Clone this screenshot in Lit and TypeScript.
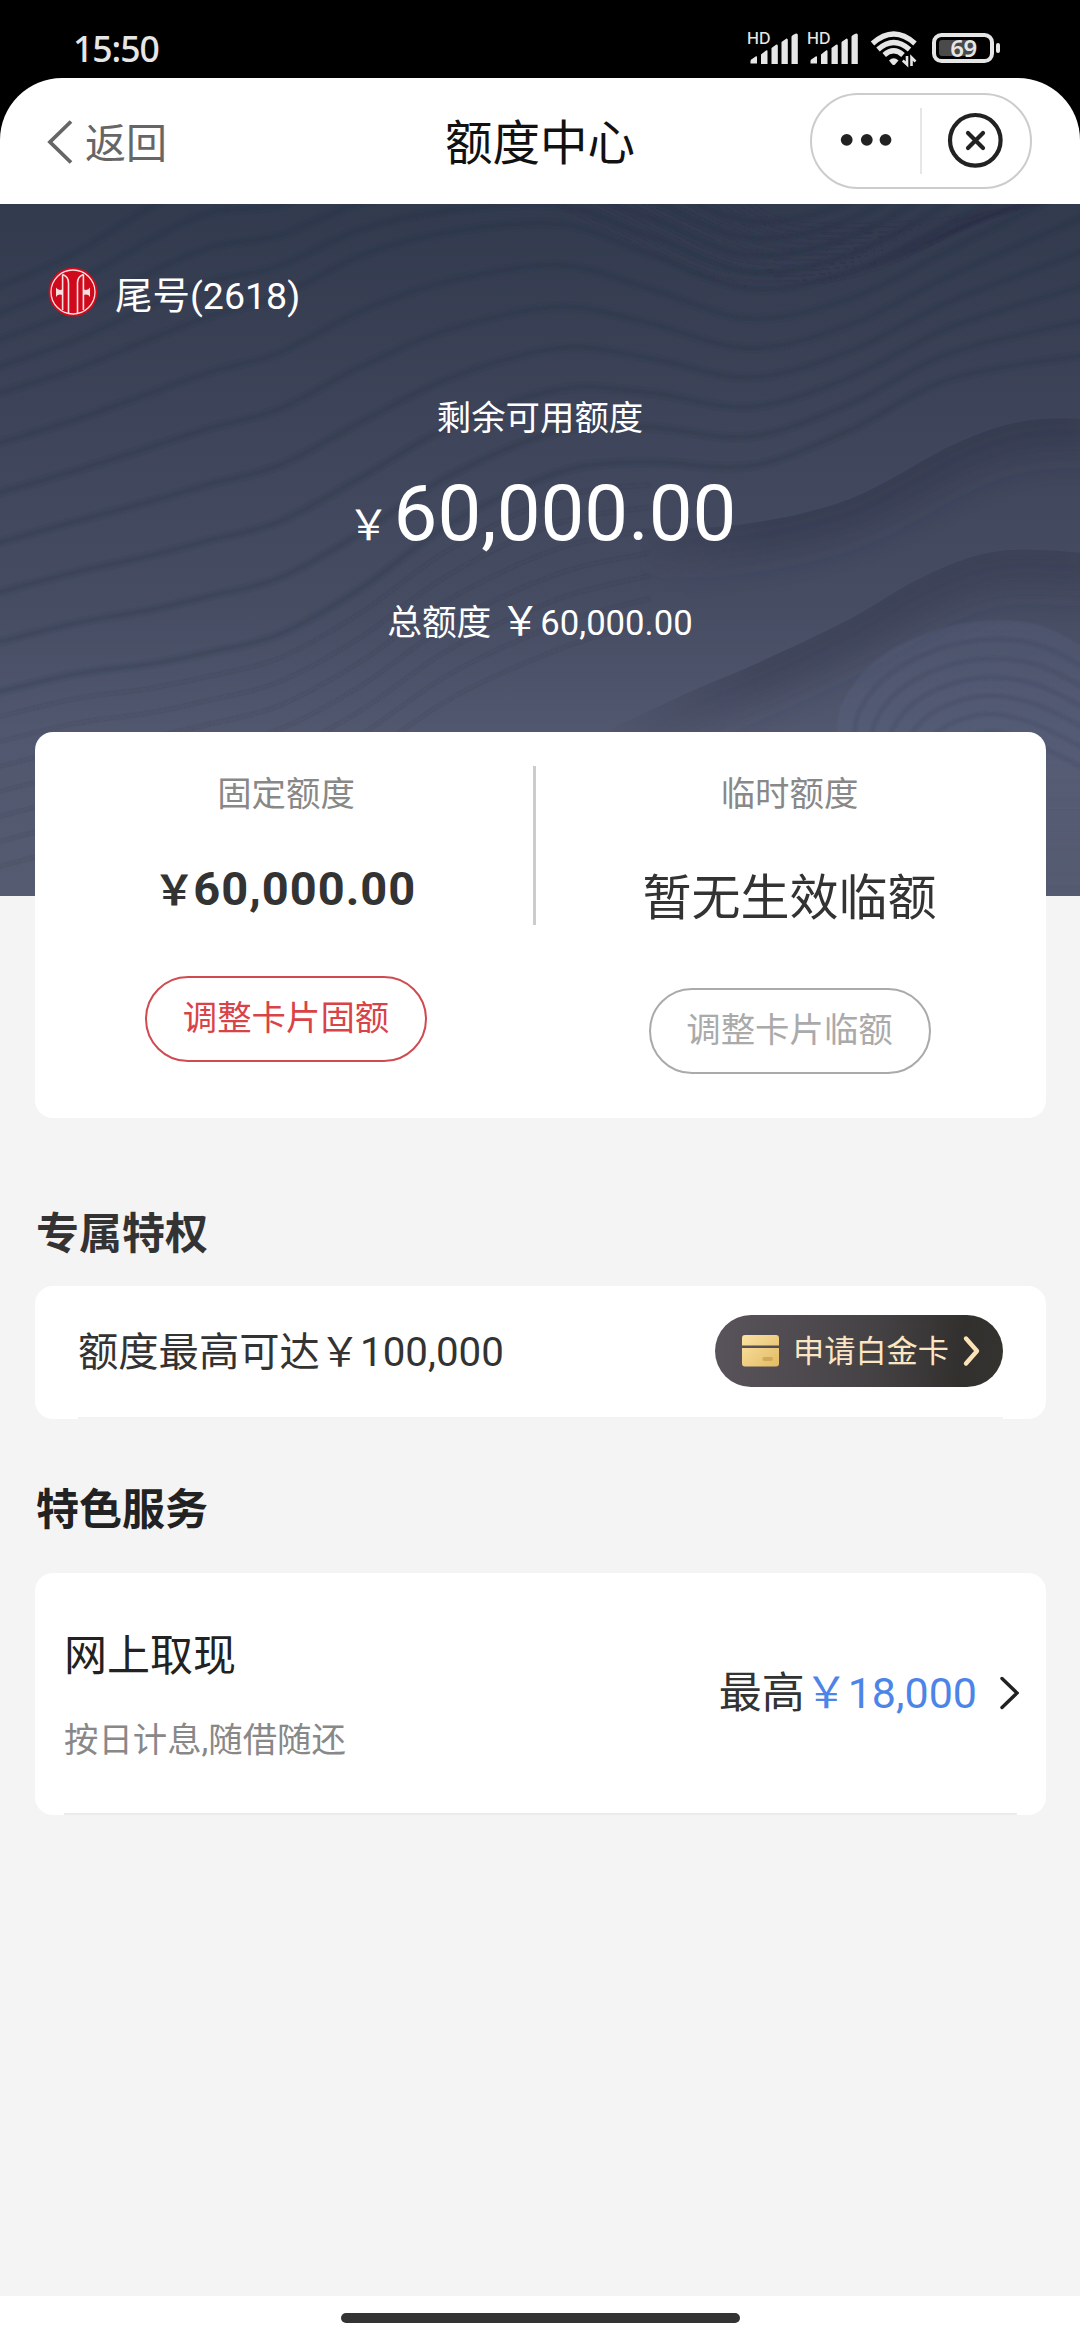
import { LitElement, html, css, svg } from "lit";
import { customElement, property } from "lit/decorators.js";

type Pt = [number, number];

/** Smooth curve through the given points (Catmull-Rom converted to cubic segments). */
function smooth(pts: Pt[]): string {
  let d = `M${pts[0][0]} ${pts[0][1]}`;
  for (let i = 0; i < pts.length - 1; i++) {
    const p0 = pts[i - 1] ?? pts[i];
    const p1 = pts[i];
    const p2 = pts[i + 1];
    const p3 = pts[i + 2] ?? p2;
    const c = [
      p1[0] + (p2[0] - p0[0]) / 6,
      p1[1] + (p2[1] - p0[1]) / 6,
      p2[0] - (p3[0] - p1[0]) / 6,
      p2[1] - (p3[1] - p1[1]) / 6,
      p2[0],
      p2[1],
    ].map((n) => n.toFixed(1));
    d += `C${c.join(" ")}`;
  }
  return d;
}

const XS = [-10, 75, 150, 210, 280, 360, 450, 560, 650, 750, 850, 950, 1090];
const UPPER = [60, 20, -30, -60, -60, -80, -80, -70, -40, 0, -20, -90, -200];
const MIDDLE = [192, 165, 135, 112, 92, 52, 28, 20, 50, 85, 68, 20, -60];
const LOWER = [490, 470, 460, 448, 430, 385, 320, 268, 258, 262, 226, 175, 150];
const BASE = [690, 668, 655, 640, 620, 580, 520, 470, 440, 425, 415, 400, 395];

function between(a: number[], b: number[], t: number, last = XS.length): string {
  return smooth(XS.slice(0, last).map((x, i) => [x, a[i] + (b[i] - a[i]) * t] as Pt));
}

const RIDGES = [
  ...[0.2, 0.4, 0.6, 0.8].map((t) => between(UPPER, MIDDLE, t)),
  ...[0, 1, 2, 3, 4, 5, 6].map((i) => between(MIDDLE, LOWER, i / 6)),
];
const FAINT = [
  ...Array.from({ length: 7 }, (_, i) => between(LOWER, BASE, (i + 1) / 8, 9)),
  ...Array.from({ length: 12 }, (_, i) =>
    smooth([
      [545 + i * 18, -6],
      [620 + i * 14, 30 - i * 1.5],
      [720 + i * 9, 76 - i * 5],
      [840 + i * 7, 74 - i * 5],
      [930 + i * 6, 40 - i * 3],
      [1000 + i * 6, -6],
    ])
  ),
];
const HILL = Array.from({ length: 7 }, (_, i) =>
  smooth([
    [836 + i * 17, 560],
    [842 + i * 17, 500 + i * 8],
    [885 + i * 13, 450 + i * 14],
    [960 + i * 6, 420 + i * 18],
    [1035, 420 + i * 20],
    [1095, 450 + i * 20],
  ])
);
const CREST: Pt[] = [[640, 326], [745, 320], [850, 295], [955, 240], [1025, 217], [1100, 215]];
const SLOPE: Pt[] = [[600, 530], [690, 488], [760, 458], [850, 415], [925, 372], [1000, 347], [1100, 350]];

@customElement("hero-waves")
export class HeroWaves extends LitElement {
  static styles = css`
    :host { display: block; }
    svg { display: block; width: 100%; height: 100%; }
  `;
  render() {
    return html`<svg viewBox="0 0 1080 692">
      <defs>
        <filter id="wide" x="-20%" y="-60%" width="140%" height="220%"><feGaussianBlur stdDeviation="16"></feGaussianBlur></filter>
        <filter id="thin"><feGaussianBlur stdDeviation="1.3"></feGaussianBlur></filter>
        <linearGradient id="light" x1="0" y1="0" x2="0" y2="1">
          <stop offset="0" stop-color="#666d90" stop-opacity=".2"></stop>
          <stop offset=".5" stop-color="#666d90" stop-opacity=".2"></stop>
          <stop offset="1" stop-color="#666d90" stop-opacity="0"></stop>
        </linearGradient>
        <linearGradient id="side" x1="0" x2="1"><stop offset="0" stop-color="#000"></stop><stop offset=".35" stop-color="#fff"></stop></linearGradient>
        <mask id="ease" maskUnits="userSpaceOnUse" x="600" y="0" width="480" height="692"><rect x="600" width="480" height="692" fill="url(#side)"></rect></mask>
        <clipPath id="crest"><path d=${smooth(CREST) + "V692H640Z"}></path></clipPath>
        <clipPath id="slope"><path d=${smooth(SLOPE) + "V692H600Z"}></path></clipPath>
      </defs>
      <g mask="url(#ease)">
        <g clip-path="url(#crest)"><path d=${smooth(CREST)} fill="none" stroke="#30364d" stroke-opacity=".55" stroke-width="60" filter="url(#wide)"></path></g>
        <g clip-path="url(#slope)"><path d=${smooth(SLOPE)} fill="none" stroke="#33394f" stroke-opacity=".55" stroke-width="66" filter="url(#wide)"></path></g>
      </g>
      <path fill="url(#light)" filter="url(#thin)" d=${HILL[0] + "V692H836Z"}></path>
      <g fill="none" filter="url(#thin)">
        ${RIDGES.map((d) => svg`<path d=${d} stroke="#262c42" stroke-opacity=".09" stroke-width="9"/><path d=${d} stroke="#262c42" stroke-opacity=".17" stroke-width="3"/>`)}
        ${FAINT.map((d) => svg`<path d=${d} stroke="#262c42" stroke-opacity=".12" stroke-width="3.500"/>`)}
        ${HILL.slice(1).map((d) => svg`<path d=${d} stroke="#343b54" stroke-opacity=".22" stroke-width="4"/>`)}
      </g>
    </svg>`;
  }
}

@customElement("status-bar")
export class StatusBar extends LitElement {
  static styles = css`
    :host { display: flex; justify-content: space-between; height: 78px; background: #000; color: #e6e6e6; }
    .time { margin: 23px 0 0 73px; font: 500 35.5px/50px "Noto Sans", Roboto, sans-serif; letter-spacing: -1px; }
    .icons { display: block; width: 264px; height: 78px; margin-right: 76px; }
    .hd { font: 500 16px Inter, Roboto, sans-serif; }
    .level { font: 600 24px "Noto Sans", Roboto, sans-serif; letter-spacing: -0.6px; }
  `;
  private signal(x: number) {
    return svg`<g transform="translate(${x} 0)">
      <text class="hd" x="-1" y="44" fill="#e6e6e6">HD</text>
      <path fill="#e6e6e6" d="M2.5 61Q2.500 59.500 4 59L8 56.300Q9 56 9 57V63.500H2.500ZM13 54.500L18 50.500Q19.500 50 19.500 51V64H13ZM23.500 48L28 44.800Q29.800 44 29.800 46V64H23.500ZM33.500 42L38.500 38.500Q39.800 38.300 39.800 40V64H33.500ZM43.500 36.500Q44 35 48 33.500Q49.800 33.200 49.800 35V64H43.500Z"/>
    </g>`;
  }
  render() {
    return html`
      <div class="time">15:50</div>
      <svg class="icons" viewBox="740 0 264 78">
        ${this.signal(748)}${this.signal(808)}
        <g fill="none" stroke="#e6e6e6" stroke-width="5.200">
          <path d="M872.500 43.500Q893.700 24.500 915 43.500"></path>
          <path d="M878 49.500Q893.700 35.500 909.500 49.500"></path>
          <path d="M884.200 55Q893.700 46.500 903 55"></path>
        </g>
        <path fill="#e6e6e6" d="M889 60.500Q893.700 56 898.500 60.500L895 64.500Q893.700 65.500 892.300 64.500Z"></path>
        <path fill="none" stroke="#e6e6e6" stroke-width="2.600" d="M907 56V64.500L902.800 60.500M911.500 66V57.500L915.500 61.500"></path>
        <rect x="934" y="35" width="58" height="26" rx="7.500" fill="none" stroke="#e6e6e6" stroke-width="4"></rect>
        <rect x="939" y="40" width="34" height="16" rx="3" fill="#4a4a4a"></rect>
        <rect x="996" y="43" width="4" height="10" rx="2" fill="#e6e6e6"></rect>
        <text class="level" x="963.500" y="57" text-anchor="middle" fill="#e6e6e6">69</text>
      </svg>
    `;
  }
}

@customElement("nav-bar")
export class NavBar extends LitElement {
  static styles = css`
    :host { display: block; background: #000; }
    .bar { display: grid; grid-template-columns: 1fr auto 1fr; height: 126px; background: #fff; border-radius: 62px 62px 0 0; }
    .back { display: flex; align-items: center; gap: 12px; padding: 0 0 0 47px; color: #666; font-size: 41px; line-height: 60px; }
    .back svg { display: block; margin-top: 1px; }
    .label { margin-top: 5px; }
    .title { font-size: 47.500px; line-height: 70px; margin-top: 31px; color: #111; }
    .capsule { display: flex; align-items: center; justify-self: end; box-sizing: border-box; width: 222px; height: 96px; margin: 15px 48px 0 0; border: 2px solid #ccc; border-radius: 48px; }
    .capsule svg { display: block; }
  `;
  render() {
    return html`<div class="bar">
      <div class="back">
        <svg width="26" height="44" viewBox="0 0 26 44" fill="none" stroke="#666" stroke-width="3.800"><path d="M24 1.500L3 22L24 42.500"></path></svg>
        <span class="label">返回</span>
      </div>
      <div class="title">额度中心</div>
      <div class="capsule">
        <svg width="218" height="92" viewBox="812 95 218 92">
          <g fill="#222"><circle cx="846.700" cy="139.800" r="5.900"></circle><circle cx="866.800" cy="139.800" r="5.900"></circle><circle cx="885.500" cy="139.800" r="5.900"></circle></g>
          <rect x="920" y="108" width="2" height="66" fill="#e6e6e6"></rect>
          <circle cx="975.300" cy="140.300" r="25.300" fill="none" stroke="#222" stroke-width="4.200"></circle>
          <path d="M968 133L983 148M983 133L968 148" stroke="#222" stroke-width="4.200" stroke-linecap="round"></path>
        </svg>
      </div>
    </div>`;
  }
}

@customElement("limit-column")
export class LimitColumn extends LitElement {
  static styles = css`
    :host { display: flex; flex-direction: column; align-items: center; }
    .name { margin-top: 37px; height: 50px; line-height: 50px; font-size: 34.400px; color: #888; }
    ::slotted(*) { display: block; }
    .action { box-sizing: border-box; width: 282px; height: 86px; border: 2px solid #d04b50; border-radius: 43px; background: none; padding: 0; text-align: center; color: #d94347; font-family: inherit; font-size: 34.400px; line-height: 80px; }
    .action.off { color: #aaa; border-color: #aaa; }
  `;
  @property() name = "";
  @property() action = "";
  @property({ type: Boolean }) off = false;
  render() {
    return html`<div class="name">${this.name}</div>
      <slot></slot>
      <div class="action ${this.off ? "off" : ""}">${this.action}</div>`;
  }
}

@customElement("app-root")
export class AppRoot extends LitElement {
  static styles = css`
    :host { display: flex; flex-direction: column; width: 1080px; height: 2340px; overflow: hidden; background: #f4f4f4; color: #333; font-family: Roboto, "Noto Sans CJK SC", sans-serif; }
    .hero { display: grid; height: 692px; background: linear-gradient(#323a4e, #3f455a 35%, #464c62 58%, #51576e 76%, #555b70); color: #fff; }
    .hero > * { grid-area: 1 / 1; }
    .waves { height: 692px; }
    .summary { position: relative; display: flex; flex-direction: column; align-items: center; }
    .account { align-self: stretch; display: flex; align-items: center; gap: 17px; height: 60px; margin: 58px 0 0 48px; font-size: 37.500px; line-height: 60px; }
    .account svg { display: block; }
    .account span { margin-top: 7px; }
    .caption { margin-top: 71px; height: 50px; line-height: 50px; font-size: 34.400px; }
    .total { display: flex; align-items: baseline; margin-top: 21px; padding-left: 4px; height: 100px; line-height: 100px; font-size: 78px; }
    .total .yen { font-size: 42px; line-height: 60px; margin-right: 4px; }
    .sum { display: flex; align-items: baseline; margin-top: 30px; height: 56px; line-height: 56px; font-size: 34.700px; }
    .sum .yen { font-size: 40px; margin-left: 9px; }
    .card { margin: 0 34px 0 35px; background: #fff; border-radius: 18px; }
    .limits { position: relative; display: flex; height: 386px; margin-top: -164px; }
    .limits .fixed { width: 494px; padding-left: 4px; }
    .limits .temp { flex: 1; padding-right: 3px; }
    .rule { width: 3px; height: 159px; margin-top: 34px; background: #ccc; }
    .amount { height: 60px; line-height: 60px; margin: 40px 0 57px; font-size: 47px; font-weight: 700; letter-spacing: 1px; white-space: nowrap; }
    .amount .yen { font-size: 41px; margin-left: -2px; letter-spacing: -1.500px; }
    .none { height: 70px; line-height: 70px; margin: 45px 0 54px; font-size: 49px; }
    h2 { margin: 0 0 0 36px; height: 64px; font-size: 43px; line-height: 64px; font-weight: 700; }
    .h-priv { margin-top: 84px; }
    .h-serv { margin-top: 59px; color: #222; }
    .priv { display: flex; flex-direction: column; height: 133px; margin-top: 20px; }
    .priv .row { display: flex; align-items: center; justify-content: space-between; height: 131px; padding: 0 43px 0 43px; }
    .offer-text { font-size: 40.300px; margin-bottom: 7px; }
    .line { height: 2px; background: #f3f3f3; margin: 0 43px; }
    .apply { display: flex; align-items: center; box-sizing: border-box; width: 288px; height: 72px; margin-top: -1px; padding-left: 27px; border-radius: 36px; background: linear-gradient(95deg, #59545b, #454245 55%, #32302e 85%, #353330); color: #fbe6c4; font-size: 31.200px; line-height: 60px; }
    .apply svg { display: block; }
    .apply span { margin: 2px 13px 0 14px; }
    .serv { display: flex; flex-direction: column; justify-content: space-between; height: 242px; margin-top: 31px; }
    .serv .row { display: flex; align-items: center; height: 240px; padding: 0 27px 0 29px; }
    .serv .line { margin: 0 29px; background: #ebebeb; }
    .info { flex: 1; padding-top: 2px; }
    .name { font-size: 43px; line-height: 64px; color: #222; }
    .desc { margin-top: 27px; font-size: 34.400px; line-height: 50px; color: #888; }
    .offer { display: flex; font-size: 43px; line-height: 64px; margin-right: 22px; }
    .blue { color: #4d84e8; }
    .foot { display: flex; justify-content: center; box-sizing: border-box; height: 44px; margin-top: auto; padding-top: 17px; background: #fff; }
    .home { width: 399px; height: 10px; border-radius: 5px; background: #333; }
  `;
  render() {
    return html`
      <status-bar></status-bar>
      <nav-bar></nav-bar>
      <section class="hero">
        <hero-waves class="waves"></hero-waves>
        <div class="summary">
          <div class="account">
            <svg width="50" height="50" viewBox="0 0 50 50">
              <circle cx="25" cy="25" r="24.500" fill="#cf0a1c"></circle>
              <g fill="none" stroke="#fbdfe0">
                <circle cx="25" cy="25" r="22" stroke-width="1.300"></circle>
                <path d="M14.600 7.500V43M35.400 7.500V43" stroke-width="1.600"></path>
                <path d="M14.600 7.500Q20.500 9.500 20.500 16V46M35.400 7.500Q29.500 9.500 29.500 16V46" stroke-width="1.600"></path>
              </g>
              <path fill="#fbdfe0" d="M8 20.500Q10 24 14.500 22.500V28Q10 26.500 8 30ZM42 20.500Q40 24 35.500 22.500V28Q40 26.500 42 30Z"></path>
            </svg>
            <span>尾号(2618)</span>
          </div>
          <div class="caption">剩余可用额度</div>
          <div class="total"><span class="yen">￥</span><span>60,000.00</span></div>
          <div class="sum"><span>总额度</span><span class="yen">￥</span><span>60,000.00</span></div>
        </div>
      </section>
      <section class="card limits">
        <limit-column class="fixed" name="固定额度" action="调整卡片固额">
          <div class="amount"><span class="yen">￥</span>60,000.00</div>
        </limit-column>
        <div class="rule"></div>
        <limit-column class="temp" name="临时额度" action="调整卡片临额" off>
          <div class="none">暂无生效临额</div>
        </limit-column>
      </section>
      <h2 class="h-priv">专属特权</h2>
      <section class="card priv">
        <div class="row">
          <span class="offer-text">额度最高可达￥100,000</span>
          <div class="apply">
            <svg width="37" height="32" viewBox="0 0 37 32">
              <defs><linearGradient id="gold" x1="0" y1="0" x2="1" y2="1"><stop offset="0" stop-color="#fbe2a4"></stop><stop offset="1" stop-color="#e2bb62"></stop></linearGradient></defs>
              <path fill="url(#gold)" d="M3 0H34Q37 0 37 3V10.500H0V3Q0 0 3 0ZM0 13H37V28.500Q37 31.500 34 31.500H3Q0 31.500 0 28.500Z"></path>
              <rect x="20.500" y="22" width="10.500" height="4" rx="2" fill="#cfa85a"></rect>
            </svg>
            <span>申请白金卡</span>
            <svg width="20" height="34" viewBox="0 0 20 34" fill="none" stroke="#fbe3b5" stroke-width="4.400" stroke-linecap="round" stroke-linejoin="round"><path d="M4 4.500L15 17L4 29.500"></path></svg>
          </div>
        </div>
        <div class="line"></div>
      </section>
      <h2 class="h-serv">特色服务</h2>
      <section class="card serv">
        <div class="row">
          <div class="info">
            <div class="name">网上取现</div>
            <div class="desc">按日计息,随借随还</div>
          </div>
          <div class="offer"><span>最高</span><span class="blue">￥18,000</span></div>
          <svg width="20" height="34" viewBox="0 0 20 34" fill="none" stroke="#222" stroke-width="3.400" stroke-linecap="round"><path d="M3 2.500L18 17L3 31.500"></path></svg>
        </div>
        <div class="line"></div>
      </section>
      <footer class="foot"><div class="home"></div></footer>
    `;
  }
}
